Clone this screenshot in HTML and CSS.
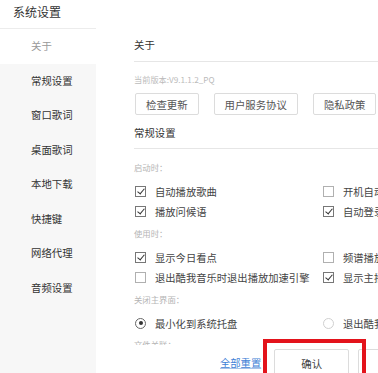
FILE: index.html
```html
<!DOCTYPE html>
<html lang="zh-CN">
<head>
    <meta charset="UTF-8">
    <meta name="viewport" content="width=device-width, initial-scale=1.0">
    <title>系统设置</title>
    <link rel="stylesheet" href="styles.css">
</head>
<body>
    <div class="app">
        <aside class="sidebar">
            <div class="sidebar-title">系统设置</div>
            <div class="nav-item active">关于</div>
            <div class="nav-item">常规设置</div>
            <div class="nav-item">窗口歌词</div>
            <div class="nav-item">桌面歌词</div>
            <div class="nav-item">本地下载</div>
            <div class="nav-item">快捷键</div>
            <div class="nav-item">网络代理</div>
            <div class="nav-item">音频设置</div>
        </aside>

        <main class="main">
            <div class="scroll">
                <div class="section-title first">关于</div>
                <div class="version">当前版本:V9.1.1.2_PQ</div>
                <div class="btn-row">
                    <button class="btn">检查更新</button>
                    <button class="btn">用户服务协议</button>
                    <button class="btn">隐私政策</button>
                </div>

                <div class="section-title">常规设置</div>

                <div class="group-label">启动时：</div>
                <div class="options">
                    <label class="option"><span class="box checked"></span>自动播放歌曲</label>
                    <label class="option"><span class="box"></span>开机自动启动</label>
                    <label class="option"><span class="box checked"></span>播放问候语</label>
                    <label class="option"><span class="box checked"></span>自动登录</label>
                </div>

                <div class="group-label">使用时：</div>
                <div class="options">
                    <label class="option"><span class="box checked"></span>显示今日看点</label>
                    <label class="option"><span class="box"></span>频谱播放</label>
                    <label class="option"><span class="box"></span>退出酷我音乐时退出播放加速引擎</label>
                    <label class="option"><span class="box checked"></span>显示主播推荐</label>
                </div>

                <div class="group-label">关闭主界面：</div>
                <div class="options">
                    <label class="option"><span class="radio selected"></span>最小化到系统托盘</label>
                    <label class="option"><span class="radio"></span>退出酷我音乐</label>
                </div>

                <div class="group-label tight">文件关联：</div>
            </div>

            <div class="footer">
                <a class="reset-link" href="#">全部重置</a>
                <button class="btn footer-btn">确认</button>
                <button class="btn footer-btn">取消</button>
            </div>
        </main>
    </div>

    <!-- annotation box around the confirm button -->
    <div class="highlight-box"></div>
</body>
</html>
```

FILE: styles.css
```css
body {
    margin: 0;
    width: 378px;
    height: 373px;
    overflow: hidden;
    font-family: "Noto Sans CJK SC", "Liberation Sans", sans-serif;
    color: #333;
    background-color: #fff;
}

.app {
    display: flex;
    height: 373px;
}

.sidebar {
    width: 96px;
    flex-shrink: 0;
    background-color: #f7f7f7;
}

.sidebar-title {
    height: 28px;
    line-height: 23px;
    padding-left: 13px;
    font-size: 12px;
    background-color: #fff;
    border-bottom: 1px solid #ececec;
}

.nav-item {
    height: 34.5px;
    line-height: 34.5px;
    padding-left: 31px;
    font-size: 10.4px;
    color: #333;
}

.nav-item.active {
    background-color: #fff;
    color: #999;
}

.main {
    flex: 1;
    min-width: 0;
    display: flex;
    flex-direction: column;
    overflow: hidden;
}

.scroll {
    height: 345px;
    flex-shrink: 0;
    overflow: hidden;
    padding-left: 38px;
    white-space: nowrap;
}

.section-title {
    margin-top: 10px;
    line-height: 16px;
    padding-bottom: 7px;
    font-size: 10.4px;
    color: #333;
    border-bottom: 1px solid #e6e6e6;
}

.section-title.first {
    margin-top: 37px;
    padding-bottom: 8px;
}

.version {
    margin-top: 11px;
    line-height: 12px;
    font-size: 8.2px;
    color: #bbb;
}

.btn-row {
    display: flex;
    gap: 15px;
    margin-top: 8px;
    margin-left: 1px;
}

.btn {
    height: 22px;
    padding: 0 10px;
    font-family: inherit;
    font-size: 10.4px;
    color: #555;
    background-color: #fff;
    border: 1px solid #dcdcdc;
    border-radius: 2px;
}

.group-label {
    margin-top: 12px;
    line-height: 12px;
    font-size: 8.4px;
    color: #b5b5b5;
}

.options + .group-label {
    margin-top: 6px;
}

.group-label.tight {
    margin-top: 5px;
}

.options {
    display: grid;
    grid-template-columns: 188px auto;
    margin-top: 8px;
    margin-left: 1px;
}

.option {
    display: flex;
    align-items: center;
    height: 20px;
    font-size: 10.3px;
    color: #444;
}

.box {
    position: relative;
    width: 11px;
    height: 11px;
    margin-right: 9px;
    box-sizing: border-box;
    border: 1px solid #b0b0b0;
    background-color: #fff;
}

.box.checked {
    border-color: #777;
}

.box.checked::after {
    content: "";
    position: absolute;
    left: 3px;
    top: 0px;
    width: 3px;
    height: 6px;
    border-right: 1.6px solid #333;
    border-bottom: 1.6px solid #333;
    transform: rotate(40deg);
}

.radio {
    position: relative;
    width: 11px;
    height: 11px;
    margin-right: 9px;
    box-sizing: border-box;
    border: 1px solid #d0d0d0;
    border-radius: 50%;
}

.radio.selected {
    border-color: #666;
}

.radio.selected::after {
    content: "";
    position: absolute;
    left: 2.5px;
    top: 2.5px;
    width: 4px;
    height: 4px;
    border-radius: 50%;
    background-color: #333;
}

.footer {
    display: flex;
    align-items: flex-start;
    gap: 9px;
    padding-top: 4px;
    padding-left: 124px;
    white-space: nowrap;
}

.reset-link {
    line-height: 28px;
    margin-right: 4px;
    font-size: 10.3px;
    color: #3f7fd6;
    text-decoration: underline;
    text-decoration-color: #a9c4ea;
}

.footer-btn {
    width: 75px;
    height: 28px;
    flex-shrink: 0;
    color: #444;
}

.highlight-box {
    position: absolute;
    left: 263px;
    top: 339px;
    width: 103px;
    height: 50px;
    box-sizing: border-box;
    border: 4px solid #e3131b;
}
```
